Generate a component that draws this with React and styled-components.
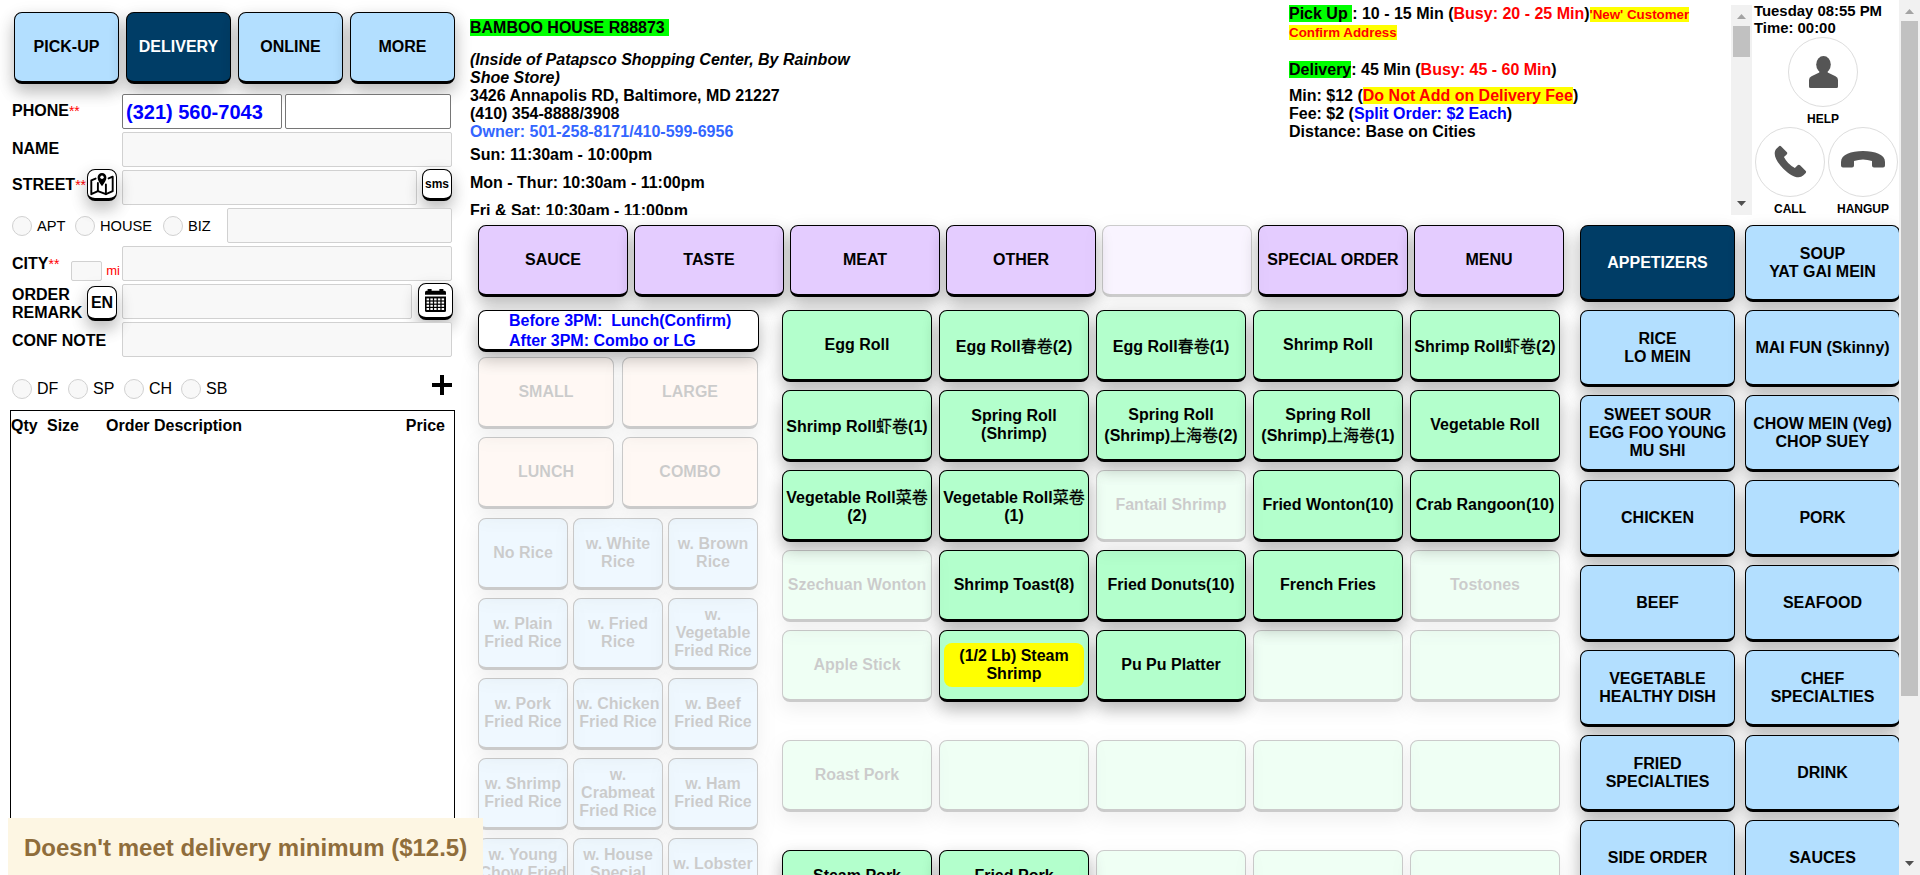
import React from "react";
import styled, { createGlobalStyle, css } from "styled-components";

const GlobalStyle = createGlobalStyle`
  * { box-sizing: border-box; }
  html, body { margin: 0; padding: 0; height: 875px; overflow: hidden; background: #fff; }
  body {
    font-family: "Liberation Sans", Arial, "Noto Sans CJK SC", sans-serif;
    font-size: 16px;
    color: #000;
  }
`;

const tones = {
  sky: "#b3dfff",
  navy: "#003d66",
  lilac: "#e4ccff",
  mint: "#b3ffcc",
  peach: "#ffe0cc",
  white: "#fff",
};

const raised = css`
  border: 1px solid #000;
  border-bottom-width: 3px;
  border-radius: 8px;
  box-shadow: 0 8px 16px 0 rgba(0, 0, 0, 0.2), 0 6px 20px 0 rgba(0, 0, 0, 0.1);
`;

/* ---------- page frame ---------- */
const Page = styled.div`
  position: relative;
  display: flex;
  width: 1920px;
  height: 875px;
  overflow: hidden;
`;
const Content = styled.div`
  display: flex;
  width: 1899px;
  height: 875px;
  overflow: hidden;
`;
const Main = styled.main`
  width: 1430px;
  flex: none;
`;

/* ---------- shared tile button ---------- */
const Tile = styled.button`
  ${raised}
  display: flex;
  align-items: center;
  justify-content: center;
  flex: none;
  width: ${(p) => p.$w}px;
  height: ${(p) => p.$h || 72}px;
  padding: 0 ${(p) => p.$px ?? 3}px;
  margin: 0;
  background: ${(p) => tones[p.$tone]};
  color: ${(p) => (p.$tone === "navy" ? "#fff" : "#000")};
  font: bold 16px "Liberation Sans", Arial, "Noto Sans CJK SC", sans-serif;
  text-align: center;
  white-space: pre-line;
  opacity: ${(p) => (p.$off ? 0.2 : 1)};
`;
const Han = styled.span`
  font-family: "Noto Sans CJK SC", sans-serif;
  font-weight: 400;
  -webkit-text-stroke: 0.3px #000;
  line-height: 21px;
`;
const Flag = styled.span`
  display: flex;
  align-items: center;
  justify-content: center;
  width: 140px;
  height: 44px;
  border-radius: 8px;
  background: #ff0;
`;
const TileRow = styled.div`
  display: flex;
  gap: ${(p) => p.$gap}px;
`;

/* ---------- order panel ---------- */
const OrderPanel = styled.aside`
  display: flex;
  flex-direction: column;
  flex: none;
  width: 469px;
  height: 875px;
  padding: 12px 14px 0 10px;
`;
const ModeRow = styled(TileRow)`
  flex: none;
  padding-left: 4px;
  margin-bottom: 10px;
`;
const FieldRow = styled.div`
  display: flex;
  flex: none;
  height: 35px;
  margin-bottom: 3px;
  padding-left: 2px;
`;
const Label = styled.div`
  display: flex;
  align-items: center;
  flex: none;
  width: 110px;
  font-weight: bold;
  line-height: 18px;
  padding-top: ${(p) => p.$drop || 0}px;
  padding-bottom: ${(p) => p.$lift || 0}px;
`;
const Required = styled.span`
  color: #f00;
  font-weight: normal;
  font-size: 14px;
`;
const Field = styled.div`
  display: flex;
  align-items: center;
  flex: none;
  width: ${(p) => p.$w}px;
  height: ${(p) => p.$h || 35}px;
  margin-left: ${(p) => p.$ml || 0}px;
  border: 1px solid ${(p) => (p.$live ? "#767676" : "#d1d1d1")};
  border-radius: 2px;
  background: ${(p) => (p.$live ? "#fff" : "#f8f8f8")};
  padding-left: 3px;
  font-size: 20px;
  font-weight: bold;
  color: #00f;
  line-height: 22px;
`;
const MiniButton = styled.div`
  ${raised}
  display: flex;
  align-items: center;
  justify-content: center;
  flex: none;
  width: ${(p) => p.$w || 30}px;
  height: ${(p) => p.$h || 32}px;
  margin-top: ${(p) => p.$mt || 0}px;
  margin-left: ${(p) => p.$ml || 0}px;
  background: #fff;
  font-size: ${(p) => p.$fs || 16}px;
  font-weight: bold;
`;
const Choices = styled.div`
  display: flex;
  align-items: center;
  width: ${(p) => p.$w || 215}px;
`;
const Choice = styled.label`
  display: flex;
  align-items: center;
  flex: none;
  gap: 5px;
  width: ${(p) => p.$w}px;
  font-size: ${(p) => p.$fs}px;
`;
const Dot = styled.span`
  width: 20px;
  height: 20px;
  border: 1px solid #d1d1d1;
  border-radius: 50%;
  background: #f8f8f8;
`;
const Miles = styled.div`
  display: flex;
  align-items: center;
  gap: 4px;
  padding: 14px 0 0;
  font-size: 13px;
  font-weight: normal;
  color: #f00;
  margin-left: auto;
  margin-right: 2px;
`;
const FlagRow = styled.div`
  display: flex;
  flex: none;
  justify-content: space-between;
  height: 50px;
  padding: 15px 3px 7px 2px;
`;
const Ticket = styled.div`
  width: 445px;
  height: 470px;
  flex: none;
  border: 1px solid #000;
`;
const TicketHead = styled.div`
  display: grid;
  grid-template-columns: 36px 59px 1fr auto;
  height: 30px;
  align-items: center;
  padding-right: 9px;
  font-weight: bold;
`;
const Toast = styled.div`
  position: absolute;
  left: 8px;
  top: 818px;
  width: 475px;
  height: 57px;
  padding: 16px 0 0 16px;
  background: #fdf6e3;
  color: #8f6d3b;
  font-size: 24px;
  font-weight: bold;
  white-space: nowrap;
`;

/* ---------- store information ---------- */
const TopBar = styled.header`
  display: flex;
  height: 215px;
  overflow: hidden;
  font-weight: bold;
  line-height: 18px;
`;
const StoreInfo = styled.section`
  width: 820px;
  padding: 19px 0 0 1px;
`;
const Mark = styled.span`
  background: ${(p) => p.$bg};
  color: ${(p) => p.$fg || "#000"};
  font-size: ${(p) => p.$fs || 16}px;
`;
const Tint = styled.span`
  color: ${(p) => p.$c};
`;
const Address = styled.div`
  width: 392px;
  padding-top: 14px;
  margin-bottom: 5px;
`;
const Hours = styled.div`
  margin-bottom: 10px;
`;
const Terms = styled.section`
  width: 442px;
  padding-top: 5px;
`;
const Para = styled.div`
  width: 420px;
  margin-bottom: ${(p) => p.$mb || 0}px;
  line-height: ${(p) => p.$lh || 18}px;
`;

/* ---------- scrollbars ---------- */
const ScrollTrack = styled.div`
  display: flex;
  flex-direction: column;
  align-items: center;
  flex: none;
  width: 21px;
  height: ${(p) => p.$h}px;
  margin-top: ${(p) => p.$mt || 0}px;
  background: #f1f1f1;
`;
const ScrollArrow = styled.svg`
  display: block;
  width: 21px;
  height: 21px;
  flex: none;
  margin-top: ${(p) => (p.$end ? "auto" : 0)};
`;
const ScrollThumb = styled.div`
  width: 17px;
  height: ${(p) => p.$h}px;
  background: #c1c1c1;
`;

/* ---------- call panel ---------- */
const CallPanel = styled.section`
  width: 147px;
  padding: 3px 0 0 2px;
`;
const Clock = styled.div`
  font-size: 14.9px;
  line-height: 17px;
  white-space: nowrap;
`;
const CallRow = styled.div`
  display: flex;
  gap: 3px;
  padding-left: ${(p) => p.$indent || 1}px;
`;
const CallItem = styled.div`
  display: flex;
  flex-direction: column;
  align-items: center;
  flex: none;
  width: 70px;
  height: 90px;
  font-size: 12px;
  line-height: 14px;
`;
const Round = styled.div`
  display: flex;
  align-items: center;
  justify-content: center;
  width: 70px;
  height: 70px;
  margin-bottom: 5px;
  flex: none;
  border: 1px solid #ddd;
  border-radius: 50%;
`;

/* ---------- menu board ---------- */
const Board = styled.div`
  display: flex;
  gap: 16px;
  padding: 10px 0 0 9px;
`;
const Middle = styled.div`
  width: 1086px;
  flex: none;
`;
const Lower = styled.div`
  display: flex;
  gap: 23px;
  margin-top: 13px;
`;
const Sizes = styled.div`
  width: 281px;
  flex: none;
`;
const Note = styled.div`
  ${raised}
  width: 281px;
  height: 42px;
  padding-left: 30px;
  background: #fff;
  color: #00f;
  font-weight: bold;
  line-height: 20px;
  white-space: pre;
`;
const SizeGrid = styled.div`
  display: grid;
  grid-template-columns: repeat(2, 136px);
  gap: 8px;
  margin-top: 5px;
`;
const RiceGrid = styled.div`
  display: grid;
  grid-template-columns: repeat(3, 90px);
  column-gap: 5px;
  row-gap: 8px;
  margin-top: 9px;
`;
const Dishes = styled.div`
  display: flex;
  flex-direction: column;
  gap: 38px;
`;
const DishGrid = styled.div`
  display: grid;
  grid-template-columns: repeat(5, 150px);
  column-gap: 7px;
  row-gap: 8px;
`;
const Categories = styled.nav`
  display: grid;
  grid-template-columns: repeat(2, 155px);
  grid-auto-rows: 77px;
  column-gap: 10px;
  row-gap: 8px;
`;

const modes = ["PICK-UP", "DELIVERY", "ONLINE", "MORE"];
const actions = ["SAUCE", "TASTE", "MEAT", "OTHER", "", "SPECIAL ORDER", "MENU"];
const sizes = ["SMALL", "LARGE", "LUNCH", "COMBO"];
const rices = [
  "No Rice", "w. White Rice", "w. Brown Rice",
  "w. Plain Fried Rice", "w. Fried Rice", "w. Vegetable Fried Rice",
  "w. Pork Fried Rice", "w. Chicken Fried Rice", "w. Beef Fried Rice",
  "w. Shrimp Fried Rice", "w. Crabmeat Fried Rice", "w. Ham Fried Rice",
  "w. Young\nChow Fried\nRice", "w. House\nSpecial\nFried Rice", "w. Lobster Fried Rice",
];
const on = (name) => ({ name });
const off = (name = "") => ({ name, off: true });
const dishGroups = [
  [
    on("Egg Roll"), on("Egg Roll春卷(2)"), on("Egg Roll春卷(1)"), on("Shrimp Roll"), on("Shrimp Roll虾卷(2)"),
    on("Shrimp Roll虾卷(1)"), on("Spring Roll (Shrimp)"), on("Spring Roll (Shrimp)上海卷(2)"), on("Spring Roll (Shrimp)上海卷(1)"), on("Vegetable Roll"),
    on("Vegetable Roll菜卷\n(2)"), on("Vegetable Roll菜卷\n(1)"), off("Fantail Shrimp"), on("Fried Wonton(10)"), on("Crab Rangoon(10)"),
    off("Szechuan Wonton"), on("Shrimp Toast(8)"), on("Fried Donuts(10)"), on("French Fries"), off("Tostones"),
    off("Apple Stick"), { name: "(1/2 Lb) Steam Shrimp", flag: true }, on("Pu Pu Platter"), off(), off(),
  ],
  [off("Roast Pork"), off(), off(), off(), off()],
  [on("Steam Pork\nDumplings"), on("Fried Pork\nDumplings"), off(), off(), off()],
];
const categories = [
  "APPETIZERS", "SOUP\nYAT GAI MEIN", "RICE\nLO MEIN", "MAI FUN (Skinny)",
  "SWEET SOUR\nEGG FOO YOUNG\nMU SHI", "CHOW MEIN (Veg)\nCHOP SUEY",
  "CHICKEN", "PORK", "BEEF", "SEAFOOD", "VEGETABLE\nHEALTHY DISH", "CHEF\nSPECIALTIES",
  "FRIED\nSPECIALTIES", "DRINK", "SIDE ORDER", "SAUCES",
];

function DishName({ text }) {
  return (
    <span>
      {text.split(/([\u4e00-\u9fff]+)/).map((part, i) =>
        i % 2 ? <Han key={i}>{part}</Han> : part
      )}
    </span>
  );
}

function Scrollbar({ height, top, thumb }) {
  return (
    <ScrollTrack $h={height} $mt={top}>
      <ScrollArrow viewBox="0 0 21 21"><path d="M6 14h9l-4.5-5z" fill="#a3a3a3" /></ScrollArrow>
      <ScrollThumb $h={thumb} />
      <ScrollArrow $end viewBox="0 0 21 21"><path d="M6 7h9l-4.5 5z" fill="#505050" /></ScrollArrow>
    </ScrollTrack>
  );
}

const MapIcon = () => (
  <svg width="24" height="24" viewBox="0 0 24 24" fill="none" stroke="#000" strokeWidth="1.9" strokeLinejoin="round" strokeLinecap="round">
    <path d="M5.6 6.6 1.3 8.4v13.8l6.6-3 8 3 6.8-3V4.6L18.6 6.4" />
    <path d="M7.9 11v8M15.9 12.5v9.5" />
    <path d="M12 14.2C9.4 10.6 7.6 8 7.6 5.4a4.4 4.4 0 0 1 8.8 0c0 2.6-1.8 5.2-4.4 8.8z" fill="#000" stroke="none" />
    <circle cx="12" cy="5.3" r="1.7" fill="#fff" stroke="none" />
  </svg>
);

const CalendarIcon = () => (
  <svg width="21" height="23" viewBox="0 0 21 23">
    <path d="M2.6 0h4v3h-4zM14.4 0h4v3h-4z" />
    <path d="M0 3.5Q0 1.8 1.5 1.8h18Q21 1.8 21 3.5V5.7H0z" />
    <path d="M0 7.6h21V21.5Q21 23 19.5 23h-18Q0 23 0 21.5z" />
    {[0, 1, 2, 3].map((r) =>
      [0, 1, 2, 3, 4].map((c) => (
        <rect key={`${r}-${c}`} x={1.6 + c * 3.75} y={9.4 + r * 3.2} width="2.5" height="2" fill="#fff" />
      ))
    )}
  </svg>
);

const PersonIcon = () => (
  <svg width="29" height="32" viewBox="0 0 29 32" fill="#555">
    <ellipse cx="14.5" cy="8.5" rx="7.3" ry="8.5" />
    <path d="M10.3 14V16.6L2.5 20.3Q0 21.5 0 24V30.5Q0 32 1.5 32H27.5Q29 32 29 30.5V24Q29 21.5 26.5 20.3L18.7 16.6V14z" />
  </svg>
);
const handset =
  "M0 14.5V11C0 3.5 10 0 22 0s22 3.5 22 11v3.5Q44 16.5 42 16.5h-9Q31 16.5 31 14.5V10Q22 7 13 10v4.5Q13 16.5 11 16.5H2Q0 16.5 0 14.5z";
const CallIcon = () => (
  <svg width="34" height="34" viewBox="0 0 34 34" fill="#555">
    <g transform="translate(15.5 18.5) rotate(-135) scale(.86) translate(-22 -8.5)"><path d={handset} /></g>
  </svg>
);
const HangupIcon = () => (
  <svg width="44" height="23" viewBox="0 0 44 23" fill="#555"><path d={handset} /></svg>
);

function OrderForm() {
  return (
    <OrderPanel>
      <ModeRow $gap={7}>
        {modes.map((m) => (
          <Tile key={m} $w={105} $tone={m === "DELIVERY" ? "navy" : "sky"}>{m}</Tile>
        ))}
      </ModeRow>
      <FieldRow>
        <Label $lift={2}>PHONE<Required>**</Required></Label>
        <Field $w={160} $live>(321) 560-7043</Field>
        <Field $w={166} $ml={3} $live />
      </FieldRow>
      <FieldRow>
        <Label $lift={2}>NAME</Label>
        <Field $w={330} />
      </FieldRow>
      <FieldRow>
        <Label $lift={6}>
          STREET<Required>**</Required>
        </Label>
        <Field $w={295} />
        <MiniButton $mt={-1} $ml={5} $fs={12}>sms</MiniButton>
      </FieldRow>
      <FieldRow>
        <Choices>
          <Choice $w={63} $fs={14.67}><Dot />APT</Choice>
          <Choice $w={88} $fs={14.67}><Dot />HOUSE</Choice>
          <Choice $w={60} $fs={14.67}><Dot />BIZ</Choice>
        </Choices>
        <Field $w={225} />
      </FieldRow>
      <FieldRow>
        <Label>
          CITY<Required>**</Required>
          <Miles><Field $w={31} $h={20} />mi</Miles>
        </Label>
        <Field $w={330} />
      </FieldRow>
      <FieldRow>
        <Label $drop={4}>ORDER<br />REMARK</Label>
        <Field $w={290} />
        <MiniButton $w={35} $h={37} $mt={-1} $ml={6}><CalendarIcon /></MiniButton>
      </FieldRow>
      <FieldRow>
        <Label $drop={2}>CONF NOTE</Label>
        <Field $w={330} />
      </FieldRow>
      <FlagRow>
        <Choices $w={300}>
          {["DF", "SP", "CH", "SB"].map((c) => (
            <Choice key={c} $w={c === "CH" ? 57 : 56} $fs={16}><Dot />{c}</Choice>
          ))}
        </Choices>
        <svg width="20" height="20" viewBox="0 0 20 20"><path d="M8 0h4v8h8v4h-8v8H8v-8H0V8h8z" /></svg>
      </FlagRow>
      <Ticket>
        <TicketHead>
          <span>Qty</span><span>Size</span><span>Order Description</span><span>Price</span>
        </TicketHead>
      </Ticket>
    </OrderPanel>
  );
}

/* Small buttons that sit over the field labels. */
const LabelBadge = styled.div`
  position: absolute;
  left: 87px;
  top: ${(p) => p.$top}px;
`;

export default function App() {
  return (
    <Page>
      <GlobalStyle />
      <Content>
        <OrderForm />
        <Main>
          <TopBar>
            <StoreInfo>
              <Mark $bg="#0f0">BAMBOO HOUSE R88873&nbsp;</Mark>
              <Address>
                <i>(Inside of Patapsco Shopping Center, By Rainbow Shoe Store)</i><br />
                3426 Annapolis RD, Baltimore, MD 21227<br />
                (410) 354-8888/3908<br />
                <Tint $c="#3366ff">Owner: 501-258-8171/410-599-6956</Tint>
              </Address>
              <Hours>Sun: 11:30am - 10:00pm</Hours>
              <Hours>Mon - Thur: 10:30am - 11:00pm</Hours>
              <Hours>Fri &amp; Sat: 10:30am - 11:00pm</Hours>
            </StoreInfo>
            <Terms>
              <Para $mb={20} $lh={17}>
                <Mark $bg="#0f0">Pick Up </Mark>: 10 - 15 Min (<Tint $c="#f00">Busy: 20 - 25 Min</Tint>)
                <Mark $bg="#ff0" $fg="#f00" $fs={13.33}>'New' Customer Confirm Address</Mark>
              </Para>
              <Para $mb={8}>
                <Mark $bg="#0f0">Delivery</Mark>: 45 Min (<Tint $c="#f00">Busy: 45 - 60 Min</Tint>)
              </Para>
              <Para>
                Min: $12 (<Mark $bg="#ff0" $fg="#f00">Do Not Add on Delivery Fee</Mark>)<br />
                Fee: $2 (<Tint $c="#00f">Split Order: $2 Each</Tint>)<br />
                Distance: Base on Cities
              </Para>
            </Terms>
            <Scrollbar height={210} top={5} thumb={31} />
            <CallPanel>
              <Clock>Tuesday 08:55 PM<br />Time: 00:00</Clock>
              <CallRow $indent={34}>
                <CallItem><Round><PersonIcon /></Round>HELP</CallItem>
              </CallRow>
              <CallRow>
                <CallItem><Round><CallIcon /></Round>CALL</CallItem>
                <CallItem><Round><HangupIcon /></Round>HANGUP</CallItem>
              </CallRow>
            </CallPanel>
          </TopBar>
          <Board>
            <Middle>
              <TileRow $gap={6}>
                {actions.map((a) => (
                  <Tile key={a} $w={150} $tone="lilac" $off={!a}>{a}</Tile>
                ))}
              </TileRow>
              <Lower>
                <Sizes>
                  <Note>{"Before 3PM:  Lunch(Confirm)\nAfter 3PM: Combo or LG"}</Note>
                  <SizeGrid>
                    {sizes.map((s) => <Tile key={s} $w={136} $tone="peach" $off>{s}</Tile>)}
                  </SizeGrid>
                  <RiceGrid>
                    {rices.map((r) => <Tile key={r} $w={90} $px={0} $tone="sky" $off>{r}</Tile>)}
                  </RiceGrid>
                </Sizes>
                <Dishes>
                  {dishGroups.map((group, g) => (
                    <DishGrid key={g}>
                      {group.map((d, i) => (
                        <Tile key={i} $w={150} $tone="mint" $off={d.off}>
                          {d.flag ? <Flag>{d.name}</Flag> : <DishName text={d.name} />}
                        </Tile>
                      ))}
                    </DishGrid>
                  ))}
                </Dishes>
              </Lower>
            </Middle>
            <Categories>
              {categories.map((c, i) => (
                <Tile key={c} $w={155} $h={77} $tone={i ? "sky" : "navy"}>{c}</Tile>
              ))}
            </Categories>
          </Board>
        </Main>
      </Content>
      <Scrollbar height={875} thumb={675} />
      <LabelBadge $top={169}><MiniButton><MapIcon /></MiniButton></LabelBadge>
      <LabelBadge $top={286}><MiniButton $h={35}>EN</MiniButton></LabelBadge>
      <Toast>Doesn't meet delivery minimum ($12.5)</Toast>
    </Page>
  );
}
